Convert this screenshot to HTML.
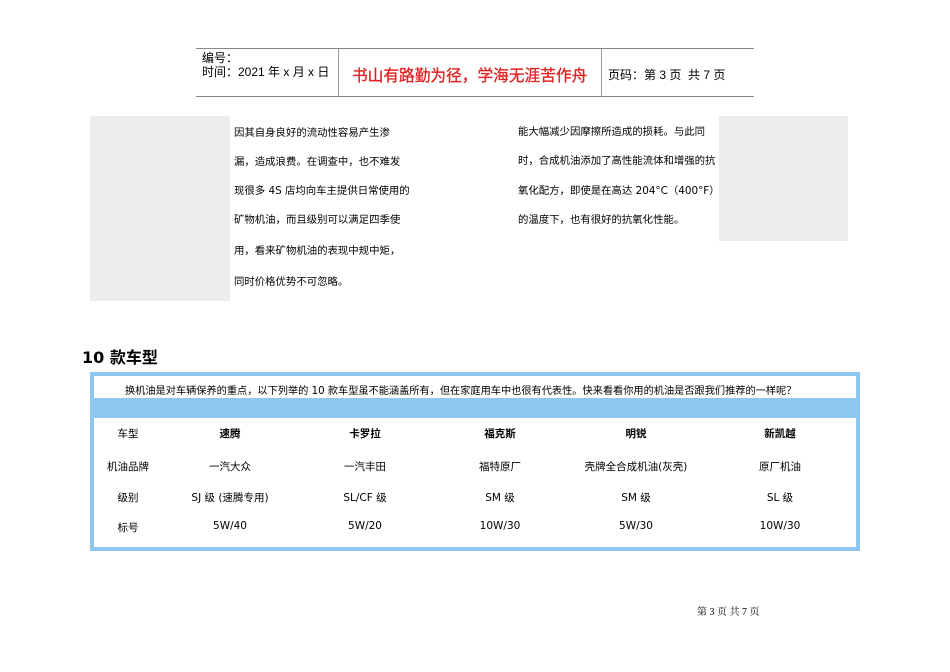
<!DOCTYPE html>
<html><head><meta charset="utf-8"><style>
body{margin:0;width:950px;height:672px;background:#fff;position:relative;font-family:"DejaVu Sans","Noto Sans CJK SC",sans-serif;color:#000;overflow:hidden}
.a{position:absolute;white-space:nowrap}
.hl{position:absolute;height:1px;background:#888}
.vl{position:absolute;width:1px;background:#999}
.g{position:absolute;background:#ececec}
.t{font-size:10.4px}
.c{position:absolute;font-size:10.5px;text-align:center;white-space:nowrap}
</style></head><body>
<div class="hl" style="left:196px;top:48px;width:558px"></div>
<div class="hl" style="left:196px;top:96px;width:558px"></div>
<div class="vl" style="left:338px;top:49px;height:47px"></div>
<div class="vl" style="left:601px;top:49px;height:47px"></div>
<div class="a" style="left:202px;top:49px;font-size:12px;font-family:'Liberation Sans','Noto Sans CJK SC',sans-serif">编号：</div>
<div class="a" style="left:202px;top:63px;font-size:12px;font-family:'Liberation Sans','Noto Sans CJK SC',sans-serif">时间：2021 年 x 月 x 日</div>
<div class="a" style="left:352px;top:63px;font-size:15.7px;color:#e02020;-webkit-text-stroke:0.3px #e02020">书山有路勤为径，学海无涯苦作舟</div>
<div class="a" style="left:608px;top:66px;font-size:12px;font-family:'Liberation Sans','Noto Sans CJK SC',sans-serif">页码：第 3 页&nbsp; 共 7 页</div>

<div class="g" style="left:90px;top:116px;width:140px;height:185px"></div>
<div class="g" style="left:719px;top:116px;width:129px;height:125px"></div>
<div class="a t" style="left:234px;top:124px">因其自身良好的流动性容易产生渗</div>
<div class="a t" style="left:234px;top:153px">漏，造成浪费。在调查中，也不难发</div>
<div class="a t" style="left:234px;top:182px">现很多 4S 店均向车主提供日常使用的</div>
<div class="a t" style="left:234px;top:211px">矿物机油，而且级别可以满足四季使</div>
<div class="a t" style="left:234px;top:242px">用，看来矿物机油的表现中规中矩，</div>
<div class="a t" style="left:234px;top:273px">同时价格优势不可忽略。</div>
<div class="a t" style="left:518px;top:123px">能大幅减少因摩擦所造成的损耗。与此同</div>
<div class="a t" style="left:518px;top:152px">时，合成机油添加了高性能流体和增强的抗</div>
<div class="a t" style="left:518px;top:182px">氧化配方，即使是在高达 204°C（400°F）</div>
<div class="a t" style="left:518px;top:211px">的温度下，也有很好的抗氧化性能。</div>

<div class="a" style="left:82px;top:344px;font-size:16px;font-weight:bold">10 款车型</div>
<div style="position:absolute;left:90px;top:372px;width:762px;height:171px;border:4px solid #8ec8f0;background:#fff"></div>
<div style="position:absolute;left:94px;top:398px;width:762px;height:20px;background:#8ec8f0"></div>
<div class="a" style="left:125px;top:382px;font-size:10.2px">换机油是对车辆保养的重点，以下列举的 10 款车型虽不能涵盖所有，但在家庭用车中也很有代表性。快来看看你用的机油是否跟我们推荐的一样呢？</div>

<div class="c" style="left:98px;width:60px;top:426px">车型</div>
<div class="c" style="left:98px;width:60px;top:459px">机油品牌</div>
<div class="c" style="left:98px;width:60px;top:490px">级别</div>
<div class="c" style="left:98px;width:60px;top:520px">标号</div>

<div class="c" style="left:170px;width:120px;top:426px;font-weight:bold">速腾</div>
<div class="c" style="left:170px;width:120px;top:459px">一汽大众</div>
<div class="c" style="left:170px;width:120px;top:490px">SJ 级 (速腾专用)</div>
<div class="c" style="left:170px;width:120px;top:520px">5W/40</div>

<div class="c" style="left:305px;width:120px;top:426px;font-weight:bold">卡罗拉</div>
<div class="c" style="left:305px;width:120px;top:459px">一汽丰田</div>
<div class="c" style="left:305px;width:120px;top:490px">SL/CF 级</div>
<div class="c" style="left:305px;width:120px;top:520px">5W/20</div>

<div class="c" style="left:440px;width:120px;top:426px;font-weight:bold">福克斯</div>
<div class="c" style="left:440px;width:120px;top:459px">福特原厂</div>
<div class="c" style="left:440px;width:120px;top:490px">SM 级</div>
<div class="c" style="left:440px;width:120px;top:520px">10W/30</div>

<div class="c" style="left:576px;width:120px;top:426px;font-weight:bold">明锐</div>
<div class="c" style="left:576px;width:120px;top:459px">壳牌全合成机油(灰壳)</div>
<div class="c" style="left:576px;width:120px;top:490px">SM 级</div>
<div class="c" style="left:576px;width:120px;top:520px">5W/30</div>

<div class="c" style="left:720px;width:120px;top:426px;font-weight:bold">新凯越</div>
<div class="c" style="left:720px;width:120px;top:459px">原厂机油</div>
<div class="c" style="left:720px;width:120px;top:490px">SL 级</div>
<div class="c" style="left:720px;width:120px;top:520px">10W/30</div>

<div class="a" style="left:697px;top:603px;font-size:10px;font-family:'Liberation Serif','Noto Serif CJK SC',serif">第 3 页 共 7 页</div>
</body></html>
